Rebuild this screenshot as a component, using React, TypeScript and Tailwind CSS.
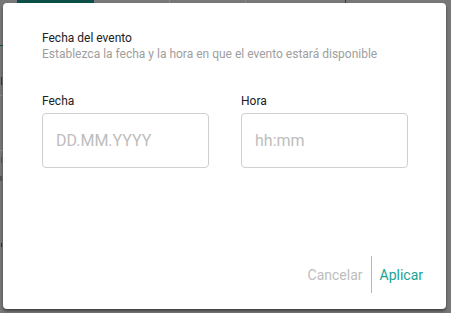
import React, { useState } from 'react';

export default function App() {
  const [fecha, setFecha] = useState('');
  const [hora, setHora] = useState('');

  return (
    <div className="relative w-[451px] h-[313px] overflow-hidden bg-[#777777] font-['Roboto',_'Liberation_Sans',_sans-serif]">
      {/* Page behind the overlay */}
      <div className="absolute inset-0 pointer-events-none">
        <div className="absolute left-[17px] top-0 w-[77px] h-[3px] bg-[#0b4f47]" />
        <div className="absolute left-[169px] top-0 w-px h-[3px] bg-[#8a8a8a]" />
        <div className="absolute left-[245px] top-0 w-px h-[3px] bg-[#8a8a8a]" />
        <div className="absolute left-[345px] top-0 w-px h-[3px] bg-[#0b4f47]" />
        <div className="absolute left-0 top-[45px] w-[3px] h-px bg-[#0b4f47]" />
        <div className="absolute left-[1px] top-[77px] w-px h-[8px] bg-[#333]" />
        <div className="absolute left-0 top-[95px] w-[3px] h-px bg-[#8a8a8a]" />
        <div className="absolute left-0 top-[150px] w-[3px] h-px bg-[#8a8a8a]" />
        <div className="absolute left-[1px] top-[157px] w-px h-[6px] bg-[#555]" />
        <div className="absolute left-0 top-[176px] w-[2px] h-[5px] border border-[#555]" />
        <div className="absolute left-[1px] top-[243px] w-px h-[4px] bg-[#333]" />
      </div>

      <div className="relative pt-[3px] pl-[3px]">
        <div className="w-[443px] h-[306px] bg-white rounded-[4px] shadow-[0_2px_3px_rgba(0,0,0,0.45)] flex flex-col pl-[39px] pr-[23px] pt-[27px] pb-[16px]">
          <h2 className="text-[12px] leading-[16px] text-[#212121] font-normal">Fecha del evento</h2>
          <p className="text-[12px] leading-[16px] text-[#9e9e9e]">
            Establezca la fecha y la hora en que el evento estará disponible
          </p>

          <div className="flex gap-[32px] mt-[31px]">
            <label className="flex flex-col gap-[4px] w-[167px]">
              <span className="text-[12px] leading-[16px] text-[#212121]">Fecha</span>
              <input
                value={fecha}
                onChange={(e) => setFecha(e.target.value)}
                placeholder="DD.MM.YYYY"
                className="h-[55px] w-full rounded-[4px] border border-[#cfcfcf] px-[13px] text-[16px] text-[#212121] placeholder:text-[#bdbdbd] outline-none"
              />
            </label>
            <label className="flex flex-col gap-[4px] w-[167px]">
              <span className="text-[12px] leading-[16px] text-[#212121]">Hora</span>
              <input
                value={hora}
                onChange={(e) => setHora(e.target.value)}
                placeholder="hh:mm"
                className="h-[55px] w-full rounded-[4px] border border-[#cfcfcf] px-[13px] text-[16px] text-[#212121] placeholder:text-[#bdbdbd] outline-none"
              />
            </label>
          </div>

          <div className="mt-auto flex items-center justify-end">
            <button type="button" className="px-[8px] text-[14px] leading-[20px] text-[#bdbdbd]">
              Cancelar
            </button>
            <div className="w-px h-[37px] bg-[#90c2ea]" />
            <button type="button" className="pl-[8px] text-[14px] leading-[20px] text-[#1aa394]">
              Aplicar
            </button>
          </div>
        </div>
      </div>
    </div>
  );
}
